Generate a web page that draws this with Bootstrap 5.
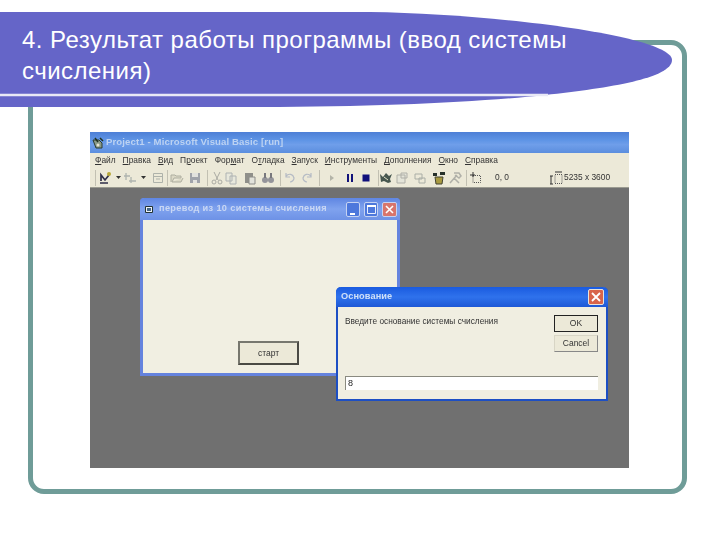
<!DOCTYPE html>
<html lang="ru">
<head>
<meta charset="utf-8">
<title>Результат работы программы</title>
<link rel="stylesheet" href="https://cdn.jsdelivr.net/npm/bootstrap@5.3.0/dist/css/bootstrap.min.css">
<style>
body { width: 720px; height: 540px; overflow: hidden; background: #fff; font-family: "Liberation Sans", Arial, sans-serif; }
.slide-frame { margin: 40px 0 0 28px; width: 659px; height: 454px; border: 5px solid #6f9c98; border-radius: 16px; padding: 87px 0 0 57px; }
.slide-banner { left: 0; top: 12px; }
.slide-title { left: 22px; top: 25px; width: 590px; color: #fff; font-size: 24px; letter-spacing: .47px; line-height: 30.5px; }
.vb-shot { width: 539px; height: 336px; background: #707070; font-size: 8.4px; color: #333; filter: blur(.35px); }
.vb-title { height: 21px; background: linear-gradient(#4d7fd6, #5f95e6 40%, #6f9eea 60%, #5b8ede); color: #bcd2f2; font-weight: 700; font-size: 9.6px; letter-spacing: .11px; padding-left: 2px; gap: 2px; }
.vb-menu { height: 15px; background: #ece9d8; padding-left: 5px; }
.vb-menu span { margin-right: 7px; font-size: 8.4px; white-space: nowrap; }
.vb-tools { height: 20px; background: #ece9d8; border-bottom: 1px solid #9a9a90; color: #333; padding-left: 5px; }
.vb-tools svg { flex: none; }
.tsep { width: 1px; height: 16px; background: #c2c0b2; flex: none; }
.l1 { margin-left: 1px; } .l2 { margin-left: 2px; } .l3 { margin-left: 3px; }
.l4 { margin-left: 4px; } .l5 { margin-left: 5px; } .l12 { margin-left: 12px; } .l40 { margin-left: 40px; }
.win-form { left: 50px; top: 66px; width: 260px; height: 178px; background: #f1efe2; border: 3px solid #6583de; border-top: 0; border-radius: 4px 4px 0 0; }
.form-bar { height: 22px; margin: 0 -3px; background: linear-gradient(#5f86e2, #7fa2ee 50%, #6e92e6); border-radius: 4px 4px 0 0; color: #c9d7f4; font-weight: 700; font-size: 9.2px; padding: 0 3px 0 5px; letter-spacing: .35px; }
.form-ico { margin-right: 5px; }
.cap-btn { width: 14px; height: 15px; border: 1px solid #c6d3f2; border-radius: 2px; background: #4d78dc; }
.cap-close { width: 15px; background: #d8756c; }
.start-btn { left: 95px; top: 143px; width: 61px; height: 24px; background: #ece9d8; border: 2px solid #77776e; border-right-color: #4a4a44; border-bottom-color: #4a4a44; font-size: 8.5px; color: #333; }
.win-dlg { left: 246px; top: 155px; width: 272px; height: 114px; background: #f0eee1; border: 2px solid #1d4fc4; border-top: 0; border-radius: 5px 5px 0 0; }
.dlg-bar { height: 20px; margin: 0 -2px; background: linear-gradient(#1a5be0, #2f72ec 50%, #1d58d6); border-radius: 5px 5px 0 0; color: #cfe0f8; font-weight: 700; font-size: 9.2px; padding: 0 4px 0 5px; letter-spacing: .1px; }
.dlg-x { width: 16px; height: 16px; border: 1px solid #e8e4dc; border-radius: 2px; background: #d8644a; }
.dlg-body { padding: 8px 8px 0 7px; height: 67px; }
.dlg-msg { font-size: 8.3px; color: #333; }
.dlg-btns { width: 44px; gap: 3px; }
.dlg-ok, .dlg-cancel { height: 17px; background: #ece9d8; font-size: 8.5px; color: #333; line-height: 15px; text-align: center; }
.dlg-ok { border: 1px solid #222; }
.dlg-cancel { border: 1px solid #d8d5c5; border-right-color: #888; border-bottom-color: #888; }
.dlg-input { margin: 2px 8px 0 7px; height: 14px; background: #fff; border: 1px solid #8a8a80; border-right: 0; border-bottom: 0; font-size: 9px; line-height: 13px; padding-left: 2px; color: #222; }
</style>
</head>
<body class="position-relative">

<div class="slide-frame">
  <div class="vb-shot position-relative d-flex flex-column">
    <div class="vb-title d-flex align-items-center">
      <svg width="12" height="12" viewBox="0 0 12 12"><path d="M1 3h6l3 3v5H4z" fill="#8a9a88" stroke="#2c3c30"/><path d="M3 1l3 4M8 1l3 3" stroke="#203020" stroke-width="1.500"/><circle cx="6" cy="8" r="1.500" fill="#e8e4d0"/></svg>
      <span>Project1 - Microsoft Visual Basic [run]</span>
    </div>
    <div class="vb-menu d-flex align-items-center">
      <span><u>Ф</u>айл</span><span><u>П</u>равка</span><span><u>В</u>ид</span><span>П<u>р</u>оект</span><span>Фор<u>м</u>ат</span><span>О<u>т</u>ладка</span><span><u>З</u>апуск</span><span><u>И</u>нструменты</span><span><u>Д</u>ополнения</span><span><u>О</u>кно</span><span><u>С</u>правка</span>
    </div>
    <div class="vb-tools d-flex align-items-center">
      <span class="tsep"></span>
      <svg class="l2" width="14" height="14" viewBox="0 0 14 14"><path d="M2 12h8M3 10V4l4 5 4-5" fill="none" stroke="#2f2f48" stroke-width="1.700"/><circle cx="11" cy="3" r="2" fill="#b8a838"/></svg>
      <svg class="l4" width="5" height="3" viewBox="0 0 5 3"><path d="M0 0h5L2.500 3z" fill="#333"/></svg>
      <svg class="l2" width="14" height="14" viewBox="0 0 14 14"><path d="M3 2v7M1 5h6M8 6v6M6 10h7" stroke="#aeb4ae" stroke-width="1.300"/></svg>
      <svg class="l4" width="5" height="3" viewBox="0 0 5 3"><path d="M0 0h5L2.500 3z" fill="#333"/></svg>
      <svg class="l5" width="14" height="14" viewBox="0 0 14 14"><path d="M2.500 2.500h9v9h-9zM2.500 5.500h9M5 8h4" fill="none" stroke="#aeb2aa"/></svg>
      <span class="tsep l2"></span>
      <svg class="l2" width="14" height="14" viewBox="0 0 14 14"><path d="M1 11V4h4l1 1h5v2H4l-2 4h9l2-4" fill="#dcd9c6" stroke="#aeaea0"/></svg>
      <svg class="l4" width="14" height="14" viewBox="0 0 14 14"><path d="M2 2h10v10H2z" fill="#a0a3aa"/><path d="M4 2h6v4H4zM5 9h4v3H5z" fill="#e2e2de"/></svg>
      <span class="tsep l5"></span>
      <svg class="l2" width="14" height="14" viewBox="0 0 14 14"><path d="M4 1l4 8M10 1L6 9" stroke="#aaaaa2"/><circle cx="4" cy="11" r="2" fill="none" stroke="#aaaaa2"/><circle cx="10" cy="11" r="2" fill="none" stroke="#aaaaa2"/></svg>
      <svg width="14" height="14" viewBox="0 0 14 14"><path d="M2 2h6v8H2zM6 5h6v8H6z" fill="#e8e8dc" stroke="#aeb2b2"/></svg>
      <svg class="l5" width="14" height="14" viewBox="0 0 14 14"><path d="M2 2h8v10H2z" fill="#8f8f8a"/><path d="M6 6h6v7H6z" fill="#e2e2da" stroke="#8c8c88"/></svg>
      <svg class="l4" width="14" height="14" viewBox="0 0 14 14"><circle cx="4" cy="9" r="3" fill="#94949a"/><circle cx="10" cy="9" r="3" fill="#94949a"/><path d="M3 2h2v5H3zM9 2h2v5H9z" fill="#78787e"/></svg>
      <span class="tsep l5"></span>
      <svg class="l2" width="14" height="14" viewBox="0 0 14 14"><path d="M3 5c3-3 7-2 8 2 0 2-2 4-4 4M3 2v4h4" fill="none" stroke="#b4bac4" stroke-width="1.200"/></svg>
      <svg class="l3" width="14" height="14" viewBox="0 0 14 14"><path d="M11 5C8 2 4 3 3 7c0 2 2 4 4 4M11 2v4H7" fill="none" stroke="#b4bac4" stroke-width="1.200"/></svg>
      <span class="tsep l5"></span>
      <svg class="l5" width="14" height="14" viewBox="0 0 14 14"><path d="M5 4l4 3-4 3z" fill="#b4b4a8"/></svg>
      <svg class="l4" width="14" height="14" viewBox="0 0 14 14"><path d="M4 3h2v8H4zM8 3h2v8H8z" fill="#12127a"/></svg>
      <svg class="l2" width="14" height="14" viewBox="0 0 14 14"><path d="M3.500 3.500h7v7h-7z" fill="#10107c"/></svg>
      <span class="tsep l5"></span>
      <svg width="14" height="14" viewBox="0 0 14 14"><path d="M1 3l3 3 3-4 3 3 3-2-2 5 1 3-3 1-4-2-3 1z" fill="#46564e"/><path d="M5 6l4 3" stroke="#e0e0c8"/></svg>
      <svg class="l2" width="14" height="14" viewBox="0 0 14 14"><path d="M2 4h8v8H2zM6 2h6v5H6z" fill="#e4e4d8" stroke="#b0b0a8"/></svg>
      <svg class="l4" width="14" height="14" viewBox="0 0 14 14"><path d="M2 3h7v5H2zM6 7h6v5H6z" fill="none" stroke="#aaaea6"/></svg>
      <svg class="l5" width="14" height="14" viewBox="0 0 14 14"><path d="M1 2h4v3H1zM8 1h5v3H8z" fill="#26302a"/><path d="M3 6h8l-1 7H4z" fill="#a89a40" stroke="#443"/></svg>
      <svg class="l2" width="14" height="14" viewBox="0 0 14 14"><path d="M2 12l7-8M6 2h5l2 3-2 2-4-3M11 12L6 7" fill="none" stroke="#b0b0a8" stroke-width="1.500"/></svg>
      <span class="tsep l4"></span>
      <svg class="l2" width="14" height="14" viewBox="0 0 14 14"><path d="M4 4.500h7.500v7H4z" fill="none" stroke="#555" stroke-dasharray="1 1"/><path d="M4 1v5M1 4h5" stroke="#333"/></svg>
      <span class="l12">0, 0</span>
      <svg class="l40" width="14" height="14" viewBox="0 0 14 14"><path d="M6 3.500h7v9H6z" fill="none" stroke="#555" stroke-dasharray="1 1"/><path d="M6 1h7M2 5v8M1 5h3M1 13h3" stroke="#333"/></svg>
      <span class="l1">5235 x 3600</span>
    </div>

    <div class="win-form position-absolute">
      <div class="form-bar d-flex align-items-center">
        <svg class="form-ico" width="9" height="9" viewBox="0 0 9 9"><path d="M.5 1.500h7v6h-7z" fill="#eef2f8" stroke="#233"/><path d="M2 3h4v3H2z" fill="#468"/></svg>
        <span class="flex-grow-1">перевод из 10 системы счисления</span>
        <span class="cap-btn d-flex align-items-end justify-content-center me-1"><svg width="7" height="5" viewBox="0 0 7 5"><path d="M0 2h5v2H0z" fill="#fff"/></svg></span>
        <span class="cap-btn d-flex align-items-center justify-content-center me-1"><svg width="9" height="9" viewBox="0 0 9 9"><path d="M.5 1.500h8v7h-8z" fill="none" stroke="#e8eefc"/><path d="M0 1h9" stroke="#fff" stroke-width="2"/></svg></span>
        <span class="cap-btn cap-close d-flex align-items-center justify-content-center"><svg width="9" height="9" viewBox="0 0 9 9"><path d="M1 1l7 7M8 1L1 8" stroke="#fff" stroke-width="1.600"/></svg></span>
      </div>
      <div class="start-btn position-absolute d-flex align-items-center justify-content-center">старт</div>
    </div>

    <div class="win-dlg position-absolute">
      <div class="dlg-bar d-flex align-items-center justify-content-between">
        <span>Основание</span>
        <span class="dlg-x d-flex align-items-center justify-content-center"><svg width="10" height="10" viewBox="0 0 10 10"><path d="M1 1l8 8M9 1L1 9" stroke="#fff" stroke-width="1.800"/></svg></span>
      </div>
      <div class="dlg-body d-flex justify-content-between">
        <div class="dlg-msg">Введите основание системы счисления</div>
        <div class="dlg-btns d-flex flex-column">
          <div class="dlg-ok">OK</div>
          <div class="dlg-cancel">Cancel</div>
        </div>
      </div>
      <div class="dlg-input">8</div>
    </div>
  </div>
</div>

<svg class="slide-banner position-absolute" width="680" height="96" viewBox="0 0 680 96">
  <path d="M0 0H370C500 2 672 24 672 48C672 66 610 76 545 83C480 90 380 95 260 95H0Z" fill="#6565c8"/>
  <path d="M0 83H548" stroke="#e9e9f6" stroke-width="2.500"/>
</svg>
<div class="slide-title position-absolute">4. Результат работы программы (ввод системы счисления)</div>

<script src="https://cdn.jsdelivr.net/npm/bootstrap@5.3.0/dist/js/bootstrap.bundle.min.js"></script>
</body>
</html>
